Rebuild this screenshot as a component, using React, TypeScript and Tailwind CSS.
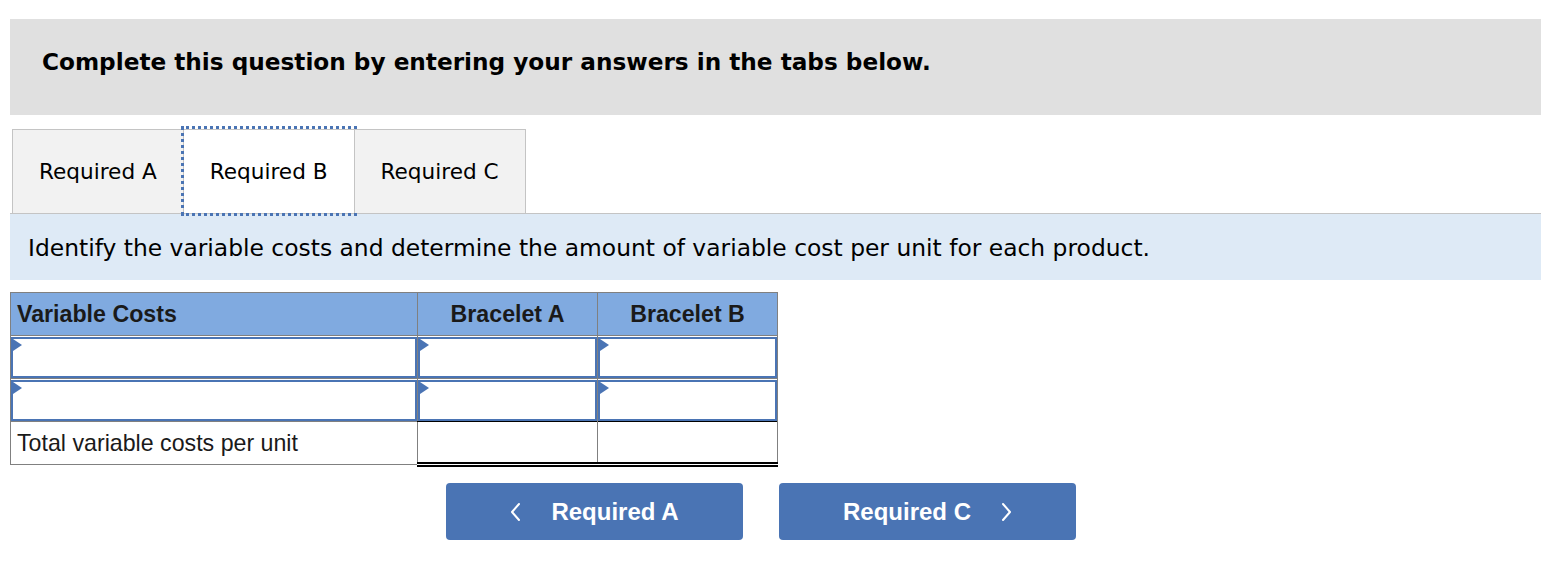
const verdana = { fontFamily: '"DejaVu Sans", Verdana, sans-serif' };
const arial = { fontFamily: '"Liberation Sans", Arial, sans-serif' };

function InputCell() {
  return (
    <td className="border border-[#808080] p-0 h-[43px]">
      <div className="relative h-[41px] border-2 border-[#4a74b4] bg-white">
        <span className="absolute left-0 top-0 w-0 h-0 border-y-[6px] border-y-transparent border-l-[9px] border-l-[#4a74b4]" />
      </div>
    </td>
  );
}

function Chevron({ dir }: { dir: 'left' | 'right' }) {
  return (
    <svg width="11" height="20" viewBox="0 0 11 20" fill="none">
      <path
        d={dir === 'left' ? 'M9 2 L2 10 L9 18' : 'M2 2 L9 10 L2 18'}
        stroke="white"
        strokeWidth="2"
        strokeLinecap="round"
        strokeLinejoin="round"
      />
    </svg>
  );
}

export default function App() {
  const tabs = ['Required A', 'Required B', 'Required C'];

  return (
    <div className="w-[1558px] h-[586px] bg-white pt-[19px] pl-[10px] pr-[17px]">
      <div className="h-[96px] bg-[#e0e0e0] flex items-center pl-[32px] pb-[10px]" style={verdana}>
        <h2 className="text-[23.2px] font-bold text-black">
          Complete this question by entering your answers in the tabs below.
        </h2>
      </div>

      <div className="mt-[14px] flex pl-[2px] border-b border-[#c4c4c4]" style={verdana}>
        {tabs.map((t, i) => (
          <div
            key={t}
            className={
              i === 1
                ? 'h-[84px] px-[26px] flex items-center bg-white border-t border-[#c4c4c4] outline-[3px] outline-dotted outline-[#4a74b4] outline-offset-[0px]'
                : 'h-[84px] px-[26px] flex items-center bg-[#f2f2f2] border-t border-l border-r border-[#c4c4c4]'
            }
          >
            <span className="text-[21.6px] text-black pt-[2px]">{t}</span>
          </div>
        ))}
      </div>

      <div className="h-[66px] bg-[#deeaf6] flex items-center pl-[18px]" style={verdana}>
        <p className="text-[23.4px] text-black pt-[4px]">
          Identify the variable costs and determine the amount of variable cost per unit for each product.
        </p>
      </div>

      <table className="mt-[12px] border-collapse text-[#1a1a1a]" style={arial}>
        <colgroup>
          <col className="w-[407px]" />
          <col className="w-[180px]" />
          <col className="w-[180px]" />
        </colgroup>
        <thead>
          <tr className="bg-[#80aae0] h-[43px]">
            <th className="border border-[#808080] text-left pl-[6px] text-[23.2px] font-bold">Variable Costs</th>
            <th className="border border-[#808080] text-center text-[23.2px] font-bold">Bracelet A</th>
            <th className="border border-[#808080] text-center text-[23.2px] font-bold">Bracelet B</th>
          </tr>
        </thead>
        <tbody>
          <tr>
            <InputCell />
            <InputCell />
            <InputCell />
          </tr>
          <tr>
            <InputCell />
            <InputCell />
            <InputCell />
          </tr>
          <tr className="h-[43px]">
            <td className="border border-[#808080] pl-[6px] text-[23.2px]">Total variable costs per unit</td>
            <td className="border-l border-r border-[#808080] border-t border-t-black border-b-[5px] border-b-black border-double" />
            <td className="border-l border-r border-[#808080] border-t border-t-black border-b-[5px] border-b-black border-double" />
          </tr>
        </tbody>
      </table>

      <div className="mt-[16px] ml-[436px] flex gap-[36px]" style={arial}>
        <button className="w-[297px] h-[57px] rounded-[4px] bg-[#4a74b4] text-white flex items-center justify-center gap-[30px]">
          <Chevron dir="left" />
          <span className="text-[24px] font-bold">Required A</span>
        </button>
        <button className="w-[297px] h-[57px] rounded-[4px] bg-[#4a74b4] text-white flex items-center justify-center gap-[30px]">
          <span className="text-[24px] font-bold">Required C</span>
          <Chevron dir="right" />
        </button>
      </div>
    </div>
  );
}
